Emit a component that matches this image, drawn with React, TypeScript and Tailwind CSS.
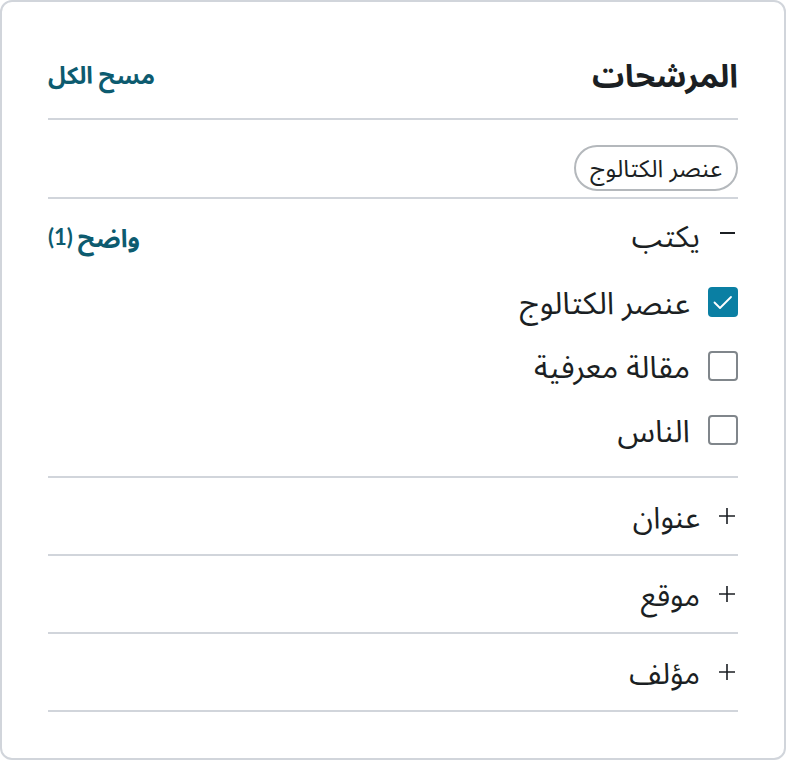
import { useState } from "react";

const options = [
  { label: "عنصر الكتالوج", checked: true },
  { label: "مقالة معرفية", checked: false },
  { label: "الناس", checked: false },
];

const collapsed = ["عنوان", "موقع", "مؤلف"];

const CheckIcon = () => (
  <svg viewBox="0 0 24 24" className="w-[24px] h-[24px]" fill="none" stroke="white" strokeWidth="1.8" strokeLinecap="round" strokeLinejoin="round">
    <path d="M3.5 12.5l5.5 5.5 11-11" />
  </svg>
);

const App = () => {
  const [items, setItems] = useState(options);

  const toggle = (i: number) => {
    setItems(items.map((it, idx) => (idx === i ? { ...it, checked: !it.checked } : it)));
  };

  return (
    <div dir="rtl" className="w-[786px] h-[760px] bg-white font-['Lato','Noto_Sans_Arabic',sans-serif] text-[#1b1f23]">
      <div className="h-full border-2 border-[#d1d5db] rounded-[12px] px-[46px] pt-[42px]">
        {/* header */}
        <div className="flex items-center justify-between h-[76px] border-b-2 border-[#d1d5db]">
          <h1 className="text-[32px] font-bold leading-none -mt-3">المرشحات</h1>
          <button className="text-[24px] font-bold text-[#0d5b6f] leading-none -mt-3">مسح الكل</button>
        </div>

        {/* chips */}
        <div className="h-[79px] flex items-end pb-[6px] border-b-2 border-[#d1d5db]">
          <span className="inline-flex items-center h-[46px] px-[14px] rounded-full border-2 border-[#b4b8bc] text-[24px] leading-none">
            عنصر الكتالوج
          </span>
        </div>

        {/* expanded section */}
        <div className="border-b-2 border-[#d1d5db] pb-[31px]">
          <div className="flex items-center justify-between h-[72px]">
            <div className="flex items-center gap-[20px]">
              <span className="w-[15px] h-[2px] bg-[#1b1f23] mr-[3px] -mt-[4px]" />
              <span className="text-[30px] leading-none">يكتب</span>
            </div>
            <button className="flex items-center gap-[5px] font-bold text-[#0d5b6f] leading-none mt-[4px]">
              <span className="text-[25px]">واضح</span>
              <span className="text-[22px] font-bold">(1)</span>
            </button>
          </div>
          <div className="flex flex-col gap-[34px] mt-[16px]">
            {items.map((it, i) => (
              <label key={it.label} className="flex items-center gap-[18px] h-[30px] cursor-pointer" onClick={() => toggle(i)}>
                {it.checked ? (
                  <span className="w-[30px] h-[30px] rounded-[4px] bg-[#0a7fa3] flex items-center justify-center">
                    <CheckIcon />
                  </span>
                ) : (
                  <span className="w-[30px] h-[30px] rounded-[4px] border-2 border-[#80868b] bg-white" />
                )}
                <span className="text-[31px] leading-none">{it.label}</span>
              </label>
            ))}
          </div>
        </div>

        {/* collapsed sections */}
        {collapsed.map((name) => (
          <div key={name} className="h-[78px] flex items-center gap-[18px] border-b-2 border-[#d1d5db]">
            <svg viewBox="0 0 18 18" className="w-[18px] h-[18px] mr-[2px]" stroke="#1b1f23" strokeWidth="1.6">
              <path d="M9 1v16M1 9h16" />
            </svg>
            <span className="text-[30px] leading-none">{name}</span>
          </div>
        ))}
      </div>
    </div>
  );
};

export default App;
